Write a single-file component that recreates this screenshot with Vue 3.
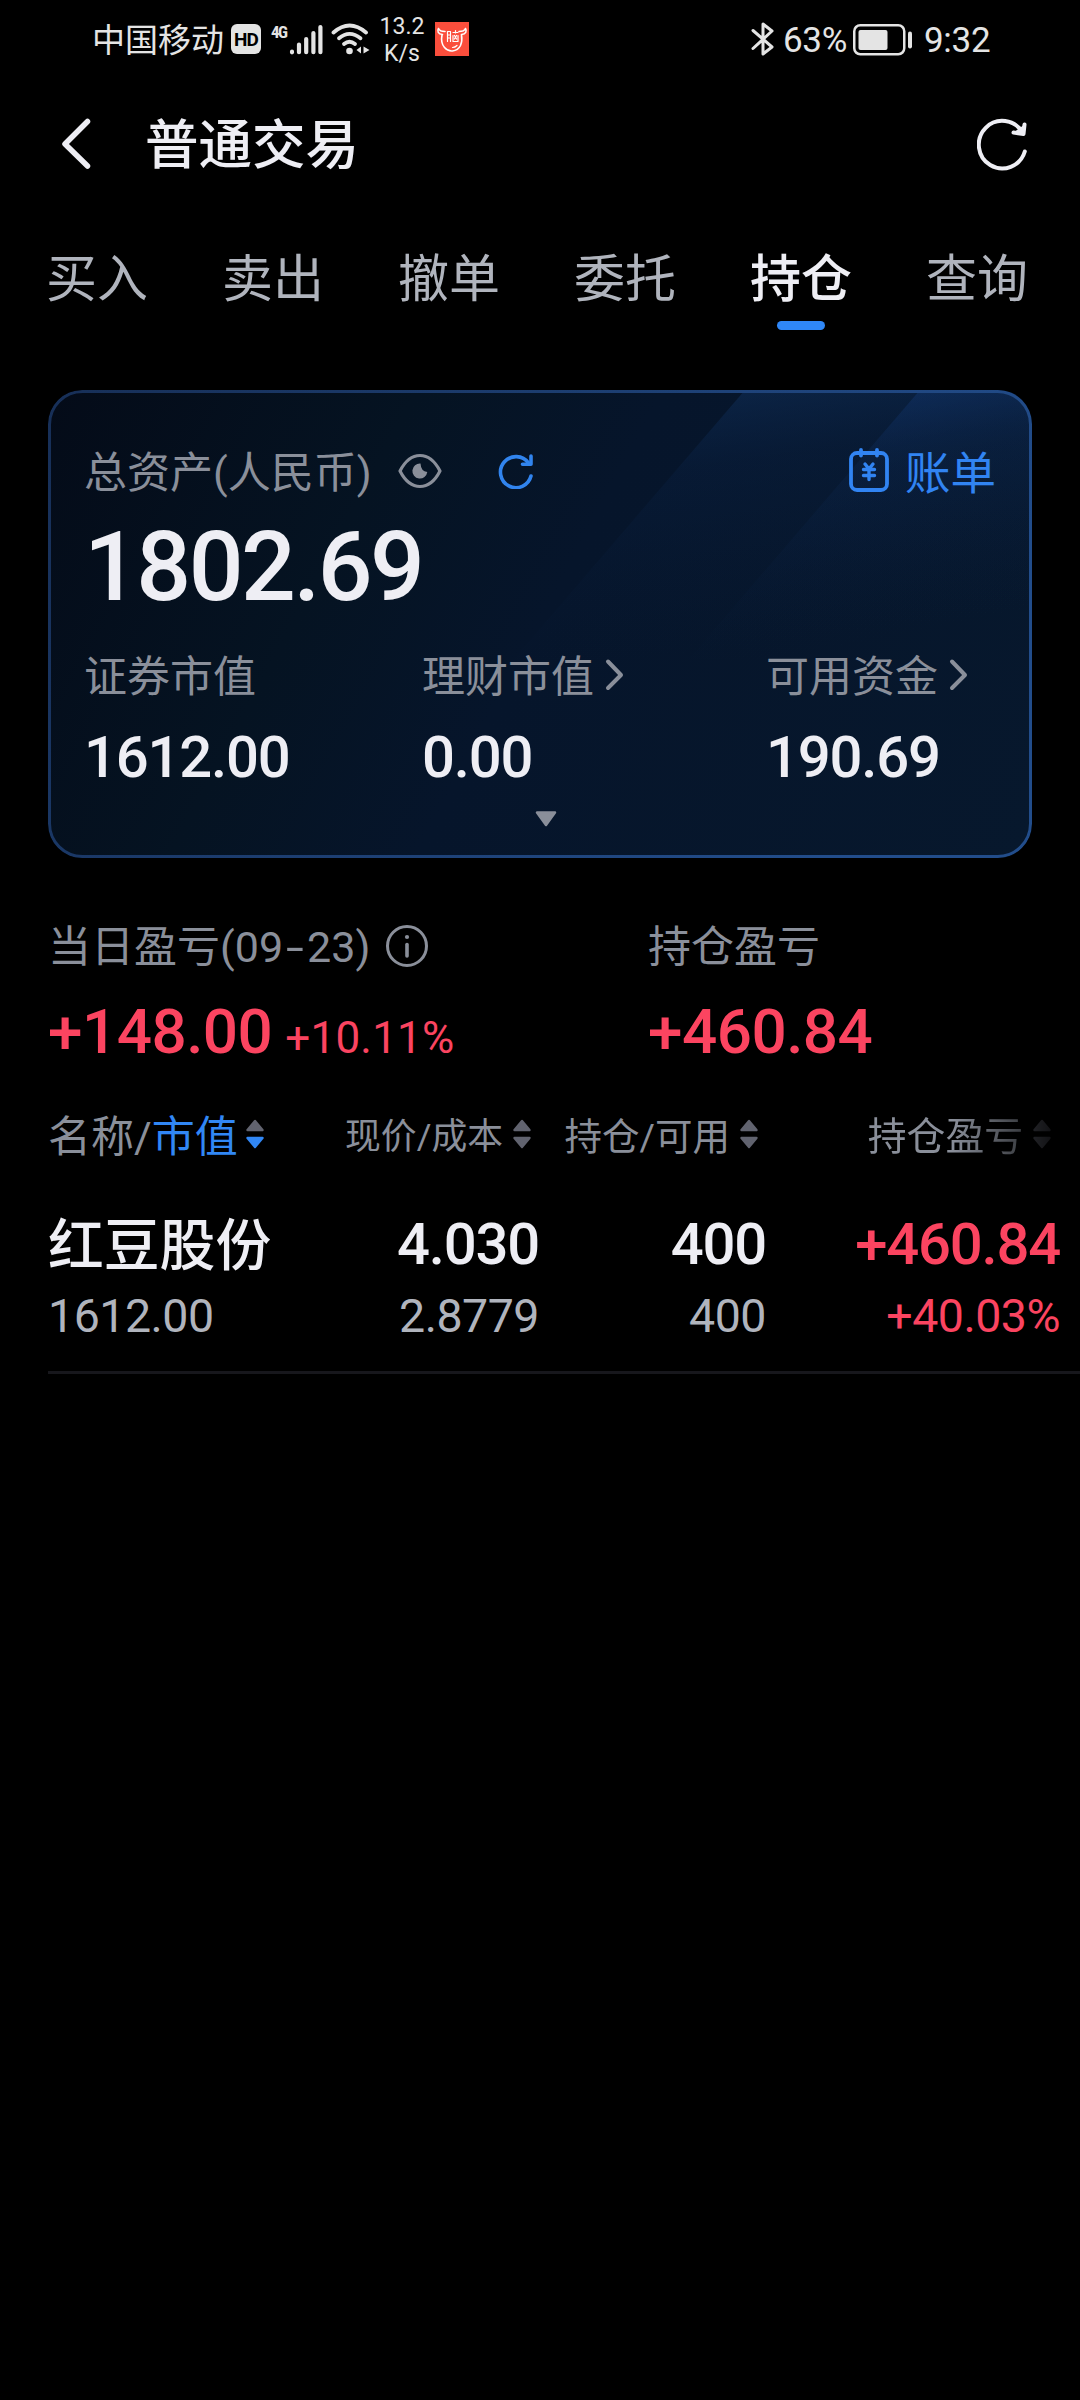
<script setup>
const tabs = [
  { name: '买入' },
  { name: '卖出' },
  { name: '撤单' },
  { name: '委托' },
  { name: '持仓', active: true },
  { name: '查询' },
]
const assets = [
  { label: '证券市值', value: '1612.00' },
  { label: '理财市值', value: '0.00', link: true },
  { label: '可用资金', value: '190.69', link: true },
]
const columns = [
  { cls: 'c2', label: '现价/成本' },
  { cls: 'c3', label: '持仓/可用' },
  { cls: 'c4', label: '持仓盈亏' },
]
const holdings = [
  { name: '红豆股份', market: '1612.00', price: '4.030', cost: '2.8779', amount: '400', usable: '400', profit: '+460.84', rate: '+40.03%' },
]
</script>

<template>
  <div class="screen">
    <div class="status">
      <span class="carrier">中国移动</span>
      <span class="hd">HD</span>
      <span class="net">4G</span>
      <svg class="signal" width="34" height="32" viewBox="0 0 34 32">
        <g stroke="#e4e4e4" stroke-width="4.2" stroke-linecap="round">
          <path d="M3 27.7V28.3M10 20.5V28.2M17.2 15V28.2M24.4 9V28.2M31.4 3V28.2" />
        </g>
      </svg>
      <svg class="wifi" width="40" height="34" viewBox="0 0 40 34">
        <g fill="none" stroke="#e4e4e4" stroke-width="3.8" stroke-linecap="round">
          <path d="M2.5 10.5Q18.5 -3.5 35 10.5" />
          <path d="M8 16.2Q18.5 7.5 29.5 16.2" />
          <path d="M13 22Q18.5 17.5 24 22" />
        </g>
        <circle cx="18.5" cy="29" r="3.3" fill="#e4e4e4" />
        <path d="M25.5 28l4.5 -3.5v7zM38.5 28l-6 -3.5v7z" fill="#e4e4e4" />
      </svg>
      <span class="speed"><b>13.2</b><b>K/s</b></span>
      <svg class="app" width="34" height="34" viewBox="0 0 34 34">
        <rect width="34" height="34" fill="#fa4e3c" />
        <g fill="none" stroke="#fff" stroke-width="1.6" stroke-linecap="round" stroke-linejoin="round">
          <path d="M7.5 12.5C3 12.5 2 9 3.5 6.5C4.500 9 7 9.500 10 9.500M26.500 12.500C31 12.500 32 9 30.500 6.500C29.500 9 27 9.500 24 9.500" />
          <path d="M7 13Q5.500 21 9.500 25.500Q13 29.500 17.500 29Q23 28.500 25.500 23.500Q27.500 19 26.500 13" />
          <path d="M12.500 19.500V9.500H15.500V19.500M12.500 13H15.500M12.500 16H15.500M18 10.500H23M20.500 8.500V11M18 13.500V19.500H23V13.500M19.500 13.500L21.500 17M21.500 13.500L19.500 17" stroke-width="1.200" />
          <path d="M17.500 25.500Q20 25.500 22 23.500" stroke-width="1.200" />
        </g>
      </svg>
      <span class="spacer"></span>
      <svg class="bt" width="24" height="36" viewBox="0 0 24 36">
        <path d="M2 9.500L21 26L12 33V3L21 10L2 27.500" fill="none" stroke="#e4e4e4" stroke-width="3" stroke-linecap="round" stroke-linejoin="round" />
      </svg>
      <span class="percent">63%</span>
      <svg class="battery" width="60" height="32" viewBox="0 0 60 32">
        <rect x="1.250" y="1.250" width="50" height="29" rx="6" fill="none" stroke="#e4e4e4" stroke-width="2.500" />
        <rect x="5.500" y="6" width="29" height="20" rx="2" fill="#e4e4e4" />
        <rect x="55" y="7.500" width="4" height="17" rx="2" fill="#e4e4e4" />
      </svg>
      <span class="clock">9:32</span>
    </div>

    <header class="bar">
      <svg width="30" height="52" viewBox="0 0 30 52">
        <path d="M26.500 3.500L4 26L26.500 48" fill="none" stroke="#eeeef4" stroke-width="5.500" stroke-linecap="round" stroke-linejoin="round" />
      </svg>
      <h1>普通交易</h1>
      <svg class="reload" width="52" height="54" viewBox="0 0 52 54">
        <g fill="none" stroke="#eeeef4" stroke-width="4" stroke-linecap="round" stroke-linejoin="round">
          <path d="M47.800 34.500A23.500 23.800 0 1 1 45.500 15.500" />
          <path d="M47.500 7.500L46.500 17L36.500 15.500Z" fill="#eeeef4" stroke="none" />
          <path d="M47.500 7.500L46.500 17L36.500 15.500" />
        </g>
      </svg>
    </header>

    <nav class="tabs">
      <span v-for="t in tabs" :key="t.name" class="tab" :class="{ active: t.active }">{{ t.name }}</span>
    </nav>

    <section class="card">
      <svg class="sheen" width="984" height="468" viewBox="0 0 984 468">
        <defs>
          <linearGradient id="beamA" x1="0" y1="0" x2="0.25" y2="1">
            <stop offset="0" stop-color="#14396a" stop-opacity=".55" />
            <stop offset=".35" stop-color="#0d2a55" stop-opacity=".22" />
            <stop offset="1" stop-color="#0a2040" stop-opacity="0" />
          </linearGradient>
          <linearGradient id="beamB" x1="0" y1="0" x2="0.25" y2="1">
            <stop offset="0" stop-color="#153f86" stop-opacity=".55" />
            <stop offset=".4" stop-color="#103060" stop-opacity=".2" />
            <stop offset="1" stop-color="#0a2040" stop-opacity="0" />
          </linearGradient>
          <linearGradient id="edge" x1="0" y1="0" x2="1" y2="0.300">
            <stop offset="0" stop-color="#172f57" />
            <stop offset="1" stop-color="#224d8b" />
          </linearGradient>
        </defs>
        <path d="M697 0H984V270H465Z" fill="url(#beamA)" />
        <path d="M872 0H984V270H640Z" fill="url(#beamB)" />
        <rect x="1.500" y="1.500" width="981" height="465" rx="33" fill="none" stroke="url(#edge)" stroke-width="3" />
      </svg>
      <div class="total-head">
        <span class="label">总资产(人民币)</span>
        <svg class="eye" width="44" height="36" viewBox="0 0 44 36">
          <path d="M2 18Q10 2.500 22 2.500T42 18Q34 33.500 22 33.500T2 18Z" fill="none" stroke="#8a8f9a" stroke-width="3.200" stroke-linejoin="round" />
          <path d="M22.500 10.500A7.500 7.500 0 1 0 29.300 19Q23 18.500 22.500 10.500Z" fill="#8a8f9a" />
        </svg>
        <svg class="sync" width="36" height="36" viewBox="0 0 36 36">
          <g fill="none" stroke="#3184ee" stroke-width="3.600" stroke-linecap="round" stroke-linejoin="round">
            <path d="M33 23A15.500 15.500 0 1 1 30.500 10" />
            <path d="M33 3V11.300H24.500" />
          </g>
        </svg>
        <span class="bill">
          <svg width="42" height="46" viewBox="0 0 42 46">
            <g fill="none" stroke="#3184f2" stroke-width="3.800" stroke-linecap="round" stroke-linejoin="round">
              <rect x="3" y="6" width="36" height="37" rx="6" />
              <path d="M13 3V8.500M29 3V8.500" />
              <path d="M17 17L21 22L25 17M15.500 22.500H26.500M15.500 28.500H26.500M21 22V32.500" stroke-width="3.400" />
            </g>
          </svg>
          <span>账单</span>
        </span>
      </div>
      <div class="total">1802.69</div>
      <div class="assets">
        <div v-for="a in assets" :key="a.label" class="asset">
          <div class="asset-label">
            <span>{{ a.label }}</span>
            <svg v-if="a.link" width="20" height="34" viewBox="0 0 20 34">
              <path d="M3 3.500L16 17L3 30" fill="none" stroke="#8a8f9a" stroke-width="4" stroke-linecap="round" stroke-linejoin="round" />
            </svg>
          </div>
          <div class="asset-value">{{ a.value }}</div>
        </div>
      </div>
      <svg class="fold" width="22" height="16" viewBox="0 0 22 16">
        <path d="M2 1.500H20L11 14Z" fill="#8a8f9a" stroke="#8a8f9a" stroke-width="2.500" stroke-linejoin="round" />
      </svg>
    </section>

    <section class="profits">
      <div class="profit day">
        <div class="profit-label">
          <span>当日盈亏(09<i class="dash">-</i>23)</span>
          <svg width="44" height="44" viewBox="0 0 44 44">
            <circle cx="22" cy="22" r="19.500" fill="none" stroke="#8a8f9a" stroke-width="3" />
            <path d="M22 20.500V32" stroke="#8a8f9a" stroke-width="3.600" stroke-linecap="round" />
            <circle cx="22" cy="13" r="2.100" fill="#8a8f9a" />
          </svg>
        </div>
        <div class="profit-value">+148.00<small>+10.11%</small></div>
      </div>
      <div class="profit">
        <div class="profit-label"><span>持仓盈亏</span></div>
        <div class="profit-value">+460.84</div>
      </div>
    </section>

    <section class="table">
      <div class="row head">
        <div class="c1">
          <span>名称/<em>市值</em></span>
          <svg class="sort" width="20" height="30" viewBox="0 0 20 30">
            <path class="arrow" d="M10 2L17.500 11H2.500Z" />
            <path class="arrow on" d="M10 28L17.500 19H2.500Z" />
          </svg>
        </div>
        <div v-for="c in columns" :key="c.cls" :class="c.cls">
          <span>{{ c.label }}</span>
          <svg class="sort" width="20" height="30" viewBox="0 0 20 30">
            <path class="arrow" d="M10 2L17.500 11H2.500Z" />
            <path class="arrow" d="M10 28L17.500 19H2.500Z" />
          </svg>
        </div>
      </div>
      <div v-for="h in holdings" :key="h.name" class="row item">
        <div class="c1"><div class="main stock">{{ h.name }}</div><div class="sub">{{ h.market }}</div></div>
        <div class="c2"><div class="main">{{ h.price }}</div><div class="sub">{{ h.cost }}</div></div>
        <div class="c3"><div class="main">{{ h.amount }}</div><div class="sub">{{ h.usable }}</div></div>
        <div class="c4 up"><div class="main">{{ h.profit }}</div><div class="sub">{{ h.rate }}</div></div>
      </div>
    </section>
  </div>
</template>

<style>
body {
  margin: 0;
  background: #000;
}
</style>

<style scoped>
.screen {
  width: 1080px;
  height: 2400px;
  overflow: hidden;
  background: #000;
  color: #eeeef4;
  font-family: Roboto, "Noto Sans CJK SC", sans-serif;
  white-space: nowrap;
}
svg {
  display: block;
  flex: none;
}
.status {
  box-sizing: border-box;
  height: 80px;
  padding: 0 90px 0 92px;
  display: flex;
  align-items: center;
  color: #e4e4e4;
}
.carrier {
  width: 139px;
  padding-top: 2px;
  font-size: 33px;
  line-height: 48px;
}
.hd {
  width: 30px;
  height: 30px;
  margin-top: -2px;
  border-radius: 6px;
  background: #e4e4e4;
  color: #000;
  font: 700 19px/31px Roboto, sans-serif;
  letter-spacing: -1px;
  text-align: center;
}
.net {
  width: 18px;
  margin: -17px 0 0 10px;
  font: 700 17px/18px "Roboto Condensed", Roboto, sans-serif;
  letter-spacing: -1.5px;
}
.signal {
  margin-top: -1px;
}
.wifi {
  margin-left: 8px;
  margin-top: -2px;
}
.speed {
  width: 50px;
  margin-left: 6px;
  text-align: center;
}
.speed b {
  display: block;
  font: 400 23px/27px Roboto, sans-serif;
}
.app {
  margin-left: 8px;
  margin-top: -2px;
}
.spacer {
  flex: 1;
}
.bt {
  margin-top: -3px;
}
.percent {
  margin-left: 8px;
  width: 70px;
  font-size: 35px;
  letter-spacing: -0.3px;
}
.clock {
  margin-left: 11px;
  width: 66px;
  font-size: 35px;
  letter-spacing: -0.3px;
}
.bar {
  box-sizing: border-box;
  height: 130px;
  padding: 0 51px 0 61px;
  display: flex;
  align-items: center;
}
.bar svg {
  margin-top: -2px;
}
h1 {
  flex: 1;
  margin: 1px 0 0 54px;
  font-size: 53.5px;
  font-weight: 500;
  line-height: 80px;
}
.tabs {
  box-sizing: border-box;
  height: 150px;
  padding: 25px 52px 0 46px;
  display: flex;
  justify-content: space-between;
}
.tab {
  height: 98px;
  display: flex;
  flex-direction: column;
  align-items: center;
  color: #b0b4bd;
  font-size: 51px;
  line-height: 89px;
}
.tab.active {
  color: #eeeef4;
  font-weight: 500;
}
.tab.active::after {
  content: "";
  width: 48px;
  height: 9px;
  margin-top: -3px;
  border-radius: 5px;
  background: #2f87f7;
}
.card {
  position: relative;
  box-sizing: border-box;
  width: 984px;
  height: 468px;
  margin: 30px 48px 0;
  padding: 46px 36px 0;
  border-radius: 34px;
  overflow: hidden;
  background: linear-gradient(118deg, #040b18 0%, #051322 30%, #06152b 50%, #07182d 100%);
}
.sheen {
  position: absolute;
  left: 0;
  top: 0;
}
.total-head,
.total,
.assets,
.fold {
  position: relative;
}
.total-head {
  height: 70px;
  display: flex;
  align-items: center;
  color: #8a8f9a;
  font-size: 43px;
}
.label {
  width: 314px;
  margin-top: -4px;
}
.sync {
  margin-left: 56px;
  margin-top: -1px;
}
.bill {
  margin-left: auto;
  display: flex;
  align-items: center;
  gap: 15px;
  color: #3184f2;
  font-size: 45.5px;
}
.bill svg {
  margin-top: -2px;
}
.bill span {
  margin: -2px 0 0 0;
}
.total {
  height: 120px;
  line-height: 122px;
  font-size: 96.5px;
  font-weight: 500;
  letter-spacing: -2.5px;
}
.assets {
  display: grid;
  grid-template-columns: 338px 344px auto;
}
.asset-label {
  height: 100px;
  display: flex;
  align-items: center;
  gap: 11px;
  color: #8a8f9a;
  font-size: 43px;
}
.asset-label span {
  margin-top: -6px;
}
.asset-label svg {
  margin-top: -2px;
}
.asset-value {
  height: 68px;
  line-height: 62px;
  font-size: 58px;
  font-weight: 500;
  letter-spacing: -1.2px;
}
.fold {
  margin: 17px 0 0 451px;
}
.profits {
  display: grid;
  grid-template-columns: 600px auto;
  padding-left: 48px;
  margin-top: 50px;
}
.profit-label {
  height: 76px;
  display: flex;
  align-items: center;
  color: #8a8f9a;
  font-size: 43px;
}
.profit-label span {
  margin-top: -6px;
}
.profit-label svg {
  margin-left: 15px;
}
.dash {
  display: inline-block;
  width: 24px;
  text-align: center;
  font-style: normal;
  transform: scaleX(1.5);
}
.profit-value {
  line-height: 96px;
  color: #fb4460;
  font-size: 62px;
  font-weight: 500;
  letter-spacing: -0.5px;
}
.profit-value small {
  margin-left: 13px;
  font-size: 44px;
  font-weight: 400;
  letter-spacing: 0.2px;
}
.row {
  display: grid;
  grid-template-columns: 265px 219px 227px 1fr;
}
.head {
  padding-left: 48px;
  height: 102px;
  margin-top: -3px;
  color: #8a8f9a;
}
.head > div {
  display: flex;
  align-items: center;
}
.head span {
  margin-top: -2px;
}
.head svg {
  margin-top: -1px;
}
.head .c1 {
  font-size: 43px;
}
.head .c2,
.head .c3,
.head .c4 {
  justify-content: flex-end;
}
.head .c2 {
  font-size: 35.8px;
}
.head .c3 {
  font-size: 37.5px;
}
.head .c4 {
  padding-right: 28px;
  font-size: 38.8px;
  -webkit-mask-image: linear-gradient(90deg, #000 60%, transparent 98%);
  mask-image: linear-gradient(90deg, #000 60%, transparent 98%);
}
.head em {
  color: #3187f5;
  font-style: normal;
}
.sort {
  margin-left: 9px;
}
.c1 .sort {
  margin-left: 7px;
}
.arrow {
  fill: #61636f;
  stroke: #61636f;
  stroke-width: 2.4px;
  stroke-linejoin: round;
}
.arrow.on {
  fill: #3187f5;
  stroke: #3187f5;
}
.item {
  box-sizing: border-box;
  height: 189px;
  margin-left: 48px;
  padding-top: 20px;
  grid-template-columns: 265px 226px 227px 1fr;
  border-bottom: 3px solid #17171c;
}
.item .c2,
.item .c3,
.item .c4 {
  text-align: right;
}
.item .c4 {
  padding-right: 20px;
}
.main {
  height: 78px;
  line-height: 79px;
  font-size: 58px;
  font-weight: 500;
  letter-spacing: -1.2px;
}
.stock {
  line-height: 82px;
  font-size: 55.8px;
  letter-spacing: 0;
}
.sub {
  line-height: 67px;
  color: #b0b4bd;
  font-size: 46.5px;
  letter-spacing: -0.5px;
}
.up,
.up .sub {
  color: #fb4460;
}
</style>
